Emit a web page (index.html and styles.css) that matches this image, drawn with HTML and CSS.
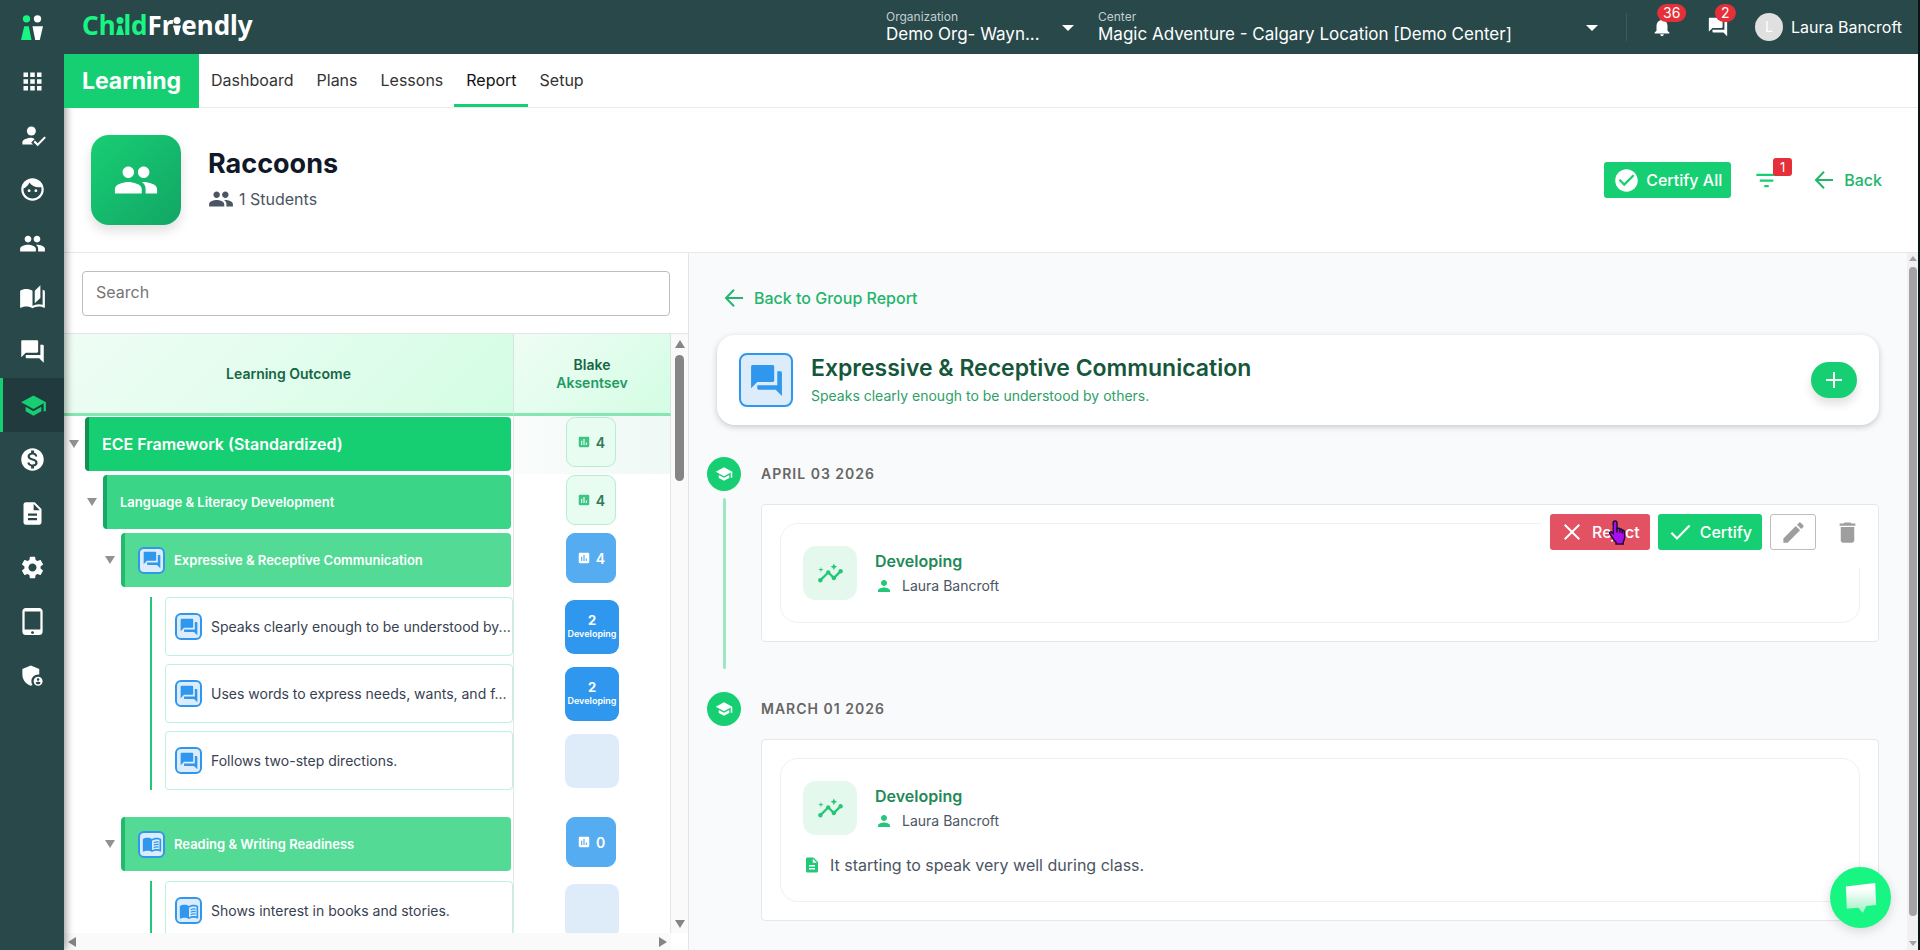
FILE: index.html
```
<!DOCTYPE html>
<html lang="en">

<head>
    <meta charset="UTF-8">
    <meta name="viewport" content="width=device-width, initial-scale=1.0">
    <title>ChildFriendly - Learning Report</title>
    <link rel="stylesheet" href="styles.css">
</head>

<body>
    <!-- icon set -->
    <svg class="defs" viewBox="0 0 24 24">
        <symbol id="apps" viewBox="0 0 24 24"><path d="M4 8h4V4H4v4zm6 12h4v-4h-4v4zm-6 0h4v-4H4v4zm0-6h4v-4H4v4zm6 0h4v-4h-4v4zm6-10v4h4V4h-4zm-6 4h4V4h-4v4zm6 6h4v-4h-4v4zm0 6h4v-4h-4v4z"/></symbol>
        <symbol id="attend" viewBox="0 0 24 24"><circle cx="11" cy="8" r="4"/><path d="M11 14c-3 0-8 1.300-8 4.200V20h9.500l-1.700-1.700 3-3 .4.300c-1-.9-2-1.600-3.200-1.600z"/><path d="M22.600 12.800l-6 6.100-2.400-2.400-1.300 1.400 3.700 3.700 7.300-7.500z"/></symbol>
        <symbol id="face" viewBox="0 0 24 24"><path d="M9 11.750c-.69 0-1.250.56-1.250 1.250s.56 1.250 1.250 1.250 1.250-.56 1.250-1.250-.56-1.250-1.250-1.250zm6 0c-.69 0-1.250.56-1.250 1.250s.56 1.250 1.250 1.250 1.250-.56 1.250-1.250-.56-1.250-1.250-1.250zM12 2C6.480 2 2 6.480 2 12s4.480 10 10 10 10-4.480 10-10S17.520 2 12 2zm0 18c-4.410 0-8-3.590-8-8 0-.29.020-.58.050-.86 2.360-1.050 4.230-2.980 5.210-5.370C11.070 8.330 14.050 10 17.420 10c.78 0 1.530-.09 2.250-.26.210.71.330 1.470.330 2.260 0 4.410-3.590 8-8 8z"/></symbol>
        <symbol id="group" viewBox="0 0 24 24"><path d="M16 11c1.660 0 2.990-1.340 2.990-3S17.660 5 16 5c-1.660 0-3 1.340-3 3s1.340 3 3 3zm-8 0c1.660 0 2.990-1.340 2.990-3S9.660 5 8 5C6.340 5 5 6.340 5 8s1.340 3 3 3zm0 2c-2.330 0-7 1.170-7 3.500V19h14v-2.500c0-2.330-4.670-3.500-7-3.500zm8 0c-.29 0-.62.020-.97.050 1.160.84 1.970 1.970 1.970 3.450V19h6v-2.500c0-2.330-4.670-3.500-7-3.500z"/></symbol>
        <symbol id="stories" viewBox="0 0 24 24"><path d="M19 1l-5 5v11l5-4.500V1zM1 6v14.650c0 .25.250.5.500.5.100 0 .150-.050.250-.050C3.100 20.450 5.050 20 6.500 20c1.950 0 4.050.4 5.500 1.500V6c-1.450-1.100-3.550-1.500-5.500-1.500S2.450 4.900 1 6zm22 13.500V6c-.6-.45-1.250-.75-2-1v13.500c-1.100-.35-2.300-.5-3.500-.5-1.700 0-4.150.65-5.500 1.500v2c1.350-.85 3.800-1.500 5.500-1.500 1.650 0 3.350.3 4.750 1.050.1.050.150.050.250.050.25 0 .5-.25.5-.5v-1.100z"/></symbol>
        <symbol id="forum" viewBox="0 0 24 24"><path d="M21 6h-2v9H6v2c0 .55.450 1 1 1h11l4 4V7c0-.55-.45-1-1-1zm-4 6V3c0-.55-.45-1-1-1H3c-.55 0-1 .45-1 1v14l4-4h10c.55 0 1-.45 1-1z"/></symbol>
        <symbol id="school" viewBox="0 0 24 24"><path d="M5 13.180v4L12 21l7-3.820v-4L12 17l-7-3.820zM12 3L1 9l11 6 9-4.910V17h2V9L12 3z"/></symbol>
        <symbol id="money" viewBox="0 0 24 24"><path d="M12 2C6.480 2 2 6.480 2 12s4.480 10 10 10 10-4.480 10-10S17.520 2 12 2zm1.410 16.090V20h-2.670v-1.930c-1.710-.36-3.160-1.460-3.270-3.400h1.960c.1 1.050.82 1.870 2.650 1.870 1.960 0 2.400-.98 2.400-1.590 0-.83-.44-1.610-2.670-2.140-2.480-.6-4.180-1.620-4.180-3.670 0-1.720 1.390-2.840 3.110-3.210V4h2.670v1.950c1.860.45 2.790 1.860 2.850 3.390H14.300c-.05-1.110-.64-1.870-2.220-1.870-1.500 0-2.400.68-2.400 1.640 0 .84.650 1.390 2.670 1.910s4.180 1.390 4.180 3.910c-.01 1.830-1.380 2.830-3.120 3.160z"/></symbol>
        <symbol id="doc" viewBox="0 0 24 24"><path d="M14 2H6c-1.100 0-2 .9-2 2v16c0 1.100.9 2 2 2h12c1.100 0 2-.9 2-2V8l-6-6zm2 16H8v-2h8v2zm0-4H8v-2h8v2zm-3-5V3.500L18.500 9H13z"/></symbol>
        <symbol id="gear" viewBox="0 0 24 24"><path d="M19.140 12.940c.04-.3.060-.61.060-.94 0-.32-.02-.64-.07-.94l2.030-1.580c.18-.14.230-.41.120-.61l-1.920-3.320c-.12-.22-.37-.29-.59-.22l-2.390.96c-.5-.38-1.030-.7-1.620-.94l-.36-2.540c-.04-.24-.24-.41-.48-.41h-3.840c-.24 0-.43.170-.47.410l-.36 2.540c-.59.240-1.130.57-1.620.94l-2.390-.96c-.22-.08-.47 0-.59.220L2.740 8.870c-.12.210-.08.470.12.610l2.030 1.580c-.05.3-.09.630-.09.940s.02.640.07.940l-2.030 1.580c-.18.140-.23.410-.12.610l1.920 3.320c.12.220.37.290.59.220l2.390-.96c.5.380 1.030.7 1.620.94l.36 2.540c.05.240.24.410.48.410h3.840c.24 0 .44-.17.470-.41l.36-2.540c.59-.24 1.130-.56 1.620-.94l2.390.96c.22.080.47 0 .59-.22l1.920-3.320c.12-.22.070-.47-.12-.61l-2.010-1.580zM12 15.600c-1.980 0-3.600-1.620-3.600-3.600s1.620-3.600 3.600-3.600 3.600 1.620 3.600 3.600-1.620 3.600-3.600 3.600z"/></symbol>
        <symbol id="tablet" viewBox="0 0 24 24"><path d="M18 0H6C4.340 0 3 1.340 3 3v18c0 1.660 1.340 3 3 3h12c1.660 0 3-1.340 3-3V3c0-1.660-1.340-3-3-3zm-6 23c-.8 0-1.300-.5-1.300-1.200s.5-1.200 1.300-1.200 1.300.5 1.300 1.200S12.800 23 12 23zm7-4H5V3h14v16z"/></symbol>
        <symbol id="shield" viewBox="0 0 24 24"><path d="M17 11c.34 0 .67.040 1 .09V6.270L10.500 3 3 6.270v4.910c0 4.540 3.200 8.790 7.500 9.820.55-.13 1.080-.32 1.600-.55-.69-.98-1.100-2.170-1.100-3.450 0-3.310 2.690-6 6-6z"/><path d="M17 13c-2.210 0-4 1.790-4 4s1.790 4 4 4 4-1.790 4-4-1.790-4-4-4zm0 1.380c.62 0 1.120.51 1.120 1.120s-.51 1.120-1.120 1.120-1.120-.51-1.120-1.120.5-1.120 1.120-1.120zm0 5.370c-.93 0-1.740-.46-2.240-1.170.05-.72 1.510-1.080 2.240-1.080s2.190.36 2.240 1.080c-.5.710-1.310 1.170-2.240 1.170z"/></symbol>
        <symbol id="bell" viewBox="0 0 24 24"><path d="M12 22c1.100 0 2-.9 2-2h-4c0 1.100.89 2 2 2zm6-6v-5c0-3.070-1.640-5.640-4.500-6.320V4c0-.83-.67-1.500-1.500-1.500s-1.500.67-1.500 1.500v.68C7.630 5.360 6 7.920 6 11v5l-2 2v1h16v-1l-2-2z"/></symbol>
        <symbol id="check-circle" viewBox="0 0 24 24"><path d="M12 2C6.480 2 2 6.480 2 12s4.480 10 10 10 10-4.480 10-10S17.520 2 12 2zm-2 15l-5-5 1.410-1.410L10 14.170l7.590-7.590L19 8l-9 9z"/></symbol>
        <symbol id="filter" viewBox="0 0 24 24"><path d="M10 18h4v-2h-4v2zM3 6v2h18V6H3zm3 7h12v-2H6v2z"/></symbol>
        <symbol id="arrow" viewBox="0 0 24 24"><path d="M21 11H6.400l6.300-6.600L11.300 3 2.600 12l8.700 9 1.400-1.400L6.400 13H21z"/></symbol>
        <symbol id="chart" viewBox="0 0 24 24"><path d="M19 3H5c-1.100 0-2 .9-2 2v14c0 1.100.9 2 2 2h14c1.100 0 2-.9 2-2V5c0-1.100-.9-2-2-2zM9 17H7v-7h2v7zm4 0h-2V7h2v10zm4 0h-2v-4h2v4z"/></symbol>
        <symbol id="book" viewBox="0 0 24 24"><path d="M21 5c-1.110-.35-2.330-.5-3.500-.5-1.950 0-4.050.4-5.500 1.500-1.450-1.100-3.550-1.500-5.500-1.500S2.450 4.900 1 6v14.650c0 .25.250.5.500.5.100 0 .150-.050.250-.050C3.100 20.450 5.050 20 6.500 20c1.950 0 4.050.4 5.500 1.500 1.350-.85 3.800-1.500 5.500-1.500 1.650 0 3.350.3 4.750 1.050.1.050.150.050.250.050.25 0 .5-.25.5-.5V6c-.6-.45-1.250-.75-2-1zm0 13.500c-1.100-.35-2.300-.5-3.500-.5-1.700 0-4.150.65-5.500 1.500V8c1.350-.85 3.800-1.500 5.500-1.500 1.200 0 2.400.15 3.500.5v11.500z"/><path d="M14 9.500c2-.9 3.800-1 6-.6v1.500c-2.200-.4-4-.3-6 .6zm0 3c2-.9 3.800-1 6-.6v1.500c-2.200-.4-4-.3-6 .6zm0 3c2-.9 3.800-1 6-.6v1.500c-2.200-.4-4-.3-6 .6z"/></symbol>
        <symbol id="insights" viewBox="0 0 24 24"><path d="M21 8c-1.450 0-2.260 1.440-1.930 2.510l-3.550 3.560c-.3-.09-.74-.09-1.040 0l-2.550-2.550C12.270 10.450 11.460 9 10 9c-1.450 0-2.270 1.440-1.930 2.520l-4.560 4.550C2.440 15.740 1 16.550 1 18c0 1.100.9 2 2 2 1.450 0 2.260-1.440 1.930-2.510l4.550-4.560c.3.090.74.090 1.040 0l2.550 2.550C12.730 16.550 13.540 18 15 18c1.450 0 2.270-1.440 1.930-2.520l3.560-3.550C21.560 12.260 23 11.450 23 10c0-1.100-.9-2-2-2z"/><path d="M15 9l.94-2.070L18 6l-2.060-.93L15 3l-.92 2.070L12 6l2.080.93zM3.500 11L4 9l2-.5L4 8l-.5-2L3 8l-2 .5L3 9z"/></symbol>
        <symbol id="person" viewBox="0 0 24 24"><path d="M12 12c2.210 0 4-1.790 4-4s-1.790-4-4-4-4 1.790-4 4 1.790 4 4 4zm0 2c-2.670 0-8 1.340-8 4v2h16v-2c0-2.660-5.330-4-8-4z"/></symbol>
        <symbol id="close" viewBox="0 0 24 24"><path d="M20 5.400L18.600 4 12 10.600 5.400 4 4 5.400l6.600 6.600L4 18.600 5.400 20l6.600-6.600 6.600 6.600 1.400-1.400-6.600-6.600z"/></symbol>
        <symbol id="check" viewBox="0 0 24 24"><path d="M9 16.900L4.200 12 2.600 13.600 9 20 22.400 6.300 20.800 4.700z"/></symbol>
        <symbol id="edit" viewBox="0 0 24 24"><path d="M3 17.250V21h3.750L17.810 9.940l-3.750-3.750L3 17.250zM20.710 7.040c.39-.39.390-1.020 0-1.410l-2.340-2.340c-.39-.39-1.020-.39-1.410 0l-1.830 1.830 3.750 3.750 1.830-1.830z"/></symbol>
        <symbol id="trash" viewBox="0 0 24 24"><path d="M6 19c0 1.100.9 2 2 2h8c1.100 0 2-.9 2-2V7H6v12zM19 4h-3.500l-1-1h-5l-1 1H5v2h14V4z"/></symbol>
        <symbol id="plus" viewBox="0 0 24 24"><path d="M20 11h-7V4h-2v7H4v2h7v7h2v-7h7z"/></symbol>
    </svg>

    <div class="app">
        <nav class="sidebar" aria-label="Main">
            <a class="side-logo" href="#" aria-label="Home">
                <svg viewBox="0 0 24 27"><g fill="#17f583"><circle cx="6" cy="4" r="4"/><path d="M3.500 12h5L11.500 27H0z"/></g><g fill="#fff"><circle cx="18" cy="4" r="4"/><path d="M12.500 12H24l-3.500 15h-5z"/></g></svg>
            </a>
            <a href="#" aria-label="Apps"><svg><use href="#apps"/></svg></a>
            <a href="#" aria-label="Attendance"><svg><use href="#attend"/></svg></a>
            <a href="#" aria-label="Children"><svg><use href="#face"/></svg></a>
            <a href="#" aria-label="Groups"><svg><use href="#group"/></svg></a>
            <a href="#" aria-label="Stories"><svg><use href="#stories"/></svg></a>
            <a href="#" aria-label="Messages"><svg><use href="#forum"/></svg></a>
            <a class="active" href="#" aria-label="Learning"><svg><use href="#school"/></svg></a>
            <a href="#" aria-label="Billing"><svg><use href="#money"/></svg></a>
            <a href="#" aria-label="Documents"><svg><use href="#doc"/></svg></a>
            <a href="#" aria-label="Settings"><svg><use href="#gear"/></svg></a>
            <a href="#" aria-label="Devices"><svg><use href="#tablet"/></svg></a>
            <a href="#" aria-label="Admin"><svg><use href="#shield"/></svg></a>
        </nav>

        <div class="page">
            <header class="topbar">
                <div class="brand"><span class="brand-green">Ch<span class="fig">i<svg viewBox="0 0 8 18"><circle cx="4" cy="3.500" r="3.500"/><path d="M2.500 8.500h3L8 18H0z"/></svg></span>ld</span>Fr<span class="fig">i<svg viewBox="0 0 8 18"><circle cx="4" cy="3.500" r="3.500"/><path d="M0 8.500h8L5.500 18h-3z"/></svg></span>endly</div>
                <div class="picker picker-org">
                    <label for="org">Organization</label>
                    <select id="org"><option>Demo Org- Wayn...</option></select>
                </div>
                <div class="picker picker-center">
                    <label for="center">Center</label>
                    <select id="center"><option>Magic Adventure - Calgary Location [Demo Center]</option></select>
                </div>
                <div class="user-area">
                    <button class="top-btn" aria-label="Notifications"><svg><use href="#bell"/></svg><span class="count">36</span></button>
                    <button class="top-btn" aria-label="Messages"><svg><use href="#forum"/></svg><span class="count">2</span></button>
                    <button class="user"><span class="avatar">L</span>Laura Bancroft</button>
                </div>
            </header>

            <nav class="tabs" aria-label="Learning">
                <span class="module">Learning</span>
                <a href="#">Dashboard</a>
                <a href="#">Plans</a>
                <a href="#">Lessons</a>
                <a class="current" href="#">Report</a>
                <a href="#">Setup</a>
            </nav>

            <section class="group-head">
                <div class="group-tile"><svg><use href="#group"/></svg></div>
                <div class="group-info">
                    <h1>Raccoons</h1>
                    <p><svg><use href="#group"/></svg>1 Students</p>
                </div>
                <div class="group-actions">
                    <button class="btn btn-green certify-all"><svg><use href="#check-circle"/></svg>Certify All</button>
                    <button class="filter" aria-label="Filter"><svg><use href="#filter"/></svg><span class="filter-count">1</span></button>
                    <a class="link" href="#"><svg><use href="#arrow"/></svg>Back</a>
                </div>
            </section>

            <main class="content">
                <section class="outcomes">
                    <div class="search"><input type="text" placeholder="Search" aria-label="Search"></div>
                    <div class="grid-area">
                        <div class="grid-view">
                            <table>
                                <thead>
                                    <tr><th class="col-outcome">Learning Outcome</th><th>Blake<span>Aksentsev</span></th></tr>
                                </thead>
                                <tbody>
                                    <tr class="row-bar level1">
                                        <td><div class="node"><button class="caret" aria-label="Collapse"></button><div class="bar">ECE Framework (Standardized)</div></div></td>
                                        <td><span class="score"><svg><use href="#chart"/></svg>4</span></td>
                                    </tr>
                                    <tr class="row-bar level2">
                                        <td><div class="node"><button class="caret" aria-label="Collapse"></button><div class="bar">Language &amp; Literacy Development</div></div></td>
                                        <td><span class="score"><svg><use href="#chart"/></svg>4</span></td>
                                    </tr>
                                    <tr class="row-bar level3">
                                        <td><div class="node"><button class="caret" aria-label="Collapse"></button><div class="bar"><span class="chip"><svg><use href="#forum"/></svg></span>Expressive &amp; Receptive Communication</div></div></td>
                                        <td><span class="score score-blue"><svg><use href="#chart"/></svg>4</span></td>
                                    </tr>
                                    <tr class="row-item first">
                                        <td><div class="branch"><div class="item"><span class="chip"><svg><use href="#forum"/></svg></span><span class="item-text">Speaks clearly enough to be understood by...</span></div></div></td>
                                        <td><button class="level">2<small>Developing</small></button></td>
                                    </tr>
                                    <tr class="row-item">
                                        <td><div class="branch"><div class="item"><span class="chip"><svg><use href="#forum"/></svg></span><span class="item-text">Uses words to express needs, wants, and f...</span></div></div></td>
                                        <td><button class="level">2<small>Developing</small></button></td>
                                    </tr>
                                    <tr class="row-item last">
                                        <td><div class="branch"><div class="item"><span class="chip"><svg><use href="#forum"/></svg></span><span class="item-text">Follows two-step directions.</span></div></div></td>
                                        <td><button class="level empty" aria-label="Not rated"></button></td>
                                    </tr>
                                    <tr class="row-bar level3">
                                        <td><div class="node"><button class="caret" aria-label="Collapse"></button><div class="bar"><span class="chip"><svg><use href="#book"/></svg></span>Reading &amp; Writing Readiness</div></div></td>
                                        <td><span class="score score-blue"><svg><use href="#chart"/></svg>0</span></td>
                                    </tr>
                                    <tr class="row-item first">
                                        <td><div class="branch"><div class="item"><span class="chip"><svg><use href="#book"/></svg></span><span class="item-text">Shows interest in books and stories.</span></div></div></td>
                                        <td><button class="level empty" aria-label="Not rated"></button></td>
                                    </tr>
                                </tbody>
                            </table>
                        </div>
                        <div class="vbar"><i class="up"></i><i class="thumb"></i><i class="down"></i></div>
                        <div class="hbar"><i class="prev"></i><i class="next"></i></div>
                    </div>
                </section>

                <section class="detail">
                    <a class="link back-link" href="#"><svg><use href="#arrow"/></svg>Back to Group Report</a>

                    <div class="topic">
                        <span class="topic-icon"><svg><use href="#forum"/></svg></span>
                        <div class="topic-text">
                            <h2>Expressive &amp; Receptive Communication</h2>
                            <p>Speaks clearly enough to be understood by others.</p>
                        </div>
                        <button class="add" aria-label="Add"><svg><use href="#plus"/></svg></button>
                    </div>

                    <article class="entry">
                        <div class="rail"><span class="dot"><svg><use href="#school"/></svg></span><span class="rail-line"></span></div>
                        <div class="entry-body">
                            <h3>APRIL 03 2026</h3>
                            <div class="entry-box">
                                <div class="note">
                                    <div class="note-head">
                                        <span class="note-icon"><svg><use href="#insights"/></svg></span>
                                        <div>
                                            <h4>Developing</h4>
                                            <p class="author"><svg><use href="#person"/></svg>Laura Bancroft</p>
                                        </div>
                                    </div>
                                </div>
                                <div class="entry-actions">
                                    <button class="btn btn-red"><svg><use href="#close"/></svg>Reject</button>
                                    <button class="btn btn-green"><svg><use href="#check"/></svg>Certify</button>
                                    <button class="btn btn-edit" aria-label="Edit"><svg><use href="#edit"/></svg></button>
                                    <button class="btn btn-trash" aria-label="Delete"><svg><use href="#trash"/></svg></button>
                                    <svg class="pointer" viewBox="0 0 18 26"><path d="M7 1c1.200 0 2 .8 2 2v6l1-.3c1-.2 1.700.2 2 .9 1-.3 1.900.1 2.200.9 1.200-.2 2.300.5 2.500 1.700l.3 5.300c0 2.500-.8 4-1.500 5v2.500H8V23c-1.500-1-3-3-4-5l-2.600-4c-.6-1.200.8-2.400 2.100-1.400L5 14V3c0-1.200.8-2 2-2z"/><path fill="none" d="M9 9v4m3-3v3m2.500-2v3"/></svg>
                                </div>
                            </div>
                        </div>
                    </article>

                    <article class="entry">
                        <div class="rail"><span class="dot"><svg><use href="#school"/></svg></span></div>
                        <div class="entry-body">
                            <h3>MARCH 01 2026</h3>
                            <div class="entry-box">
                                <div class="note">
                                    <div class="note-head">
                                        <span class="note-icon"><svg><use href="#insights"/></svg></span>
                                        <div>
                                            <h4>Developing</h4>
                                            <p class="author"><svg><use href="#person"/></svg>Laura Bancroft</p>
                                        </div>
                                    </div>
                                    <p class="comment"><svg><use href="#doc"/></svg>It starting to speak very well during class.</p>
                                </div>
                            </div>
                        </div>
                    </article>
                </section>
                <div class="vbar page-bar"><i class="up"></i><i class="thumb"></i><i class="down"></i></div>
            </main>
        </div>
    </div>

    <button class="chat" aria-label="Open chat">
        <svg viewBox="0 0 36 36"><defs><linearGradient id="bubble" x1="0" y1="0" x2="0" y2="1"><stop offset="0.200" stop-color="#fff"/><stop offset="1" stop-color="#9ff0c6"/></linearGradient></defs><path fill="url(#bubble)" d="M1 5L34 1l1 25-11 1-4 8-5-6-13 1z"/></svg>
    </button>
</body>

</html>
```
FILE: styles.css
```
* {
    margin: 0;
    padding: 0;
    box-sizing: border-box;
}

body {
    font-family: Inter, "Liberation Sans", sans-serif;
    font-size: 16px;
    color: #1f2937;
    background-color: #fff;
}

button,
input,
select {
    font: inherit;
    color: inherit;
    border: 0;
    background: none;
}

a {
    color: inherit;
    text-decoration: none;
}

svg {
    display: block;
    flex: none;
    width: 24px;
    height: 24px;
    fill: currentColor;
}

.defs {
    display: none;
}

.app {
    display: flex;
    height: 100vh;
    overflow: hidden;
    border-right: 2px solid #0c1415;
}

/* sidebar */
.sidebar {
    width: 64px;
    flex: none;
    background-color: #28484a;
    color: #fff;
    box-shadow: 2px 0 8px rgba(0, 0, 0, .4);
    z-index: 2;
}

.sidebar a {
    display: flex;
    align-items: center;
    justify-content: center;
    height: 54px;
}

.sidebar svg {
    width: 27px;
    height: 27px;
}

.sidebar .side-logo svg {
    width: 22px;
    height: 25px;
}

.sidebar .active {
    color: #17cf73;
    background-color: #203a3e;
    border-left: 3px solid #17cf73;
}

.page {
    flex: 1;
    min-width: 0;
    display: flex;
    flex-direction: column;
}

/* top bar */
.topbar {
    display: flex;
    align-items: center;
    flex: none;
    height: 54px;
    padding: 0 16px 0 18px;
    background-color: #28484a;
    color: #fff;
    position: relative;
    z-index: 3;
}

.brand {
    font-family: "Noto Sans", sans-serif;
    font-size: 26px;
    font-weight: 700;
    line-height: 32px;
    margin-right: auto;
    padding-bottom: 4px;
}

.brand-green {
    color: #17f583;
}

.fig {
    position: relative;
    -webkit-text-fill-color: transparent;
}

.fig svg {
    position: absolute;
    left: 0;
    bottom: 8px;
    width: 8px;
    height: 18px;
}

.picker {
    position: relative;
    display: flex;
    flex-direction: column;
}

.picker label {
    font-size: 12px;
    line-height: 14px;
    color: #c3cecf;
}

.picker select {
    appearance: none;
    font-size: 17px;
    line-height: 20px;
    width: 100%;
}

.picker::after {
    content: "";
    position: absolute;
    right: 8px;
    top: 15px;
    border: 6px solid transparent;
    border-top-color: #fff;
    border-bottom: 0;
}

.picker-org {
    width: 196px;
    margin-right: 16px;
}

.picker-center {
    width: 508px;
}

.user-area {
    display: flex;
    align-items: center;
    height: 28px;
    margin-left: 20px;
    padding-left: 24px;
    border-left: 1px solid #3d5a5c;
}

.top-btn {
    position: relative;
    width: 24px;
    margin-right: 32px;
}

.top-btn + .user {
    margin-left: -8px;
}

.top-btn svg {
    width: 22px;
    height: 22px;
}

.count {
    position: absolute;
    left: 12px;
    top: -12px;
    transform: translateX(-20%);
    min-width: 20px;
    padding: 0 6px;
    border-radius: 10px;
    background-color: #e5303a;
    font-size: 14px;
    line-height: 18px;
}

.user {
    display: flex;
    align-items: center;
    gap: 8px;
}

.avatar {
    width: 28px;
    height: 28px;
    border-radius: 50%;
    background-color: #e0e0e0;
    color: #fff;
    font-size: 14px;
    line-height: 28px;
}

/* module tabs */
.tabs {
    position: relative;
    z-index: 3;
    display: flex;
    flex: none;
    height: 54px;
    border-bottom: 1px solid #e9ebec;
    background-color: #fff;
    color: #333;
}

.module {
    width: 135px;
    height: 54px;
    background-color: #17cf73;
    color: #fff;
    font-size: 23px;
    font-weight: 700;
    line-height: 54px;
    text-align: center;
}

.tabs a {
    padding: 0 11px 0 12px;
    line-height: 53px;
}

.tabs .current {
    color: #111;
    border-bottom: 3px solid #17cf73;
}

/* group header */
.group-head {
    display: flex;
    align-items: center;
    flex: none;
    height: 145px;
    padding: 0 36px 0 27px;
    border-bottom: 1px solid #e6e8ea;
}

.group-tile {
    display: flex;
    align-items: center;
    justify-content: center;
    width: 90px;
    height: 90px;
    border-radius: 18px;
    background-image: linear-gradient(135deg, #17cf73, #12a566);
    box-shadow: 0 6px 12px rgba(0, 0, 0, .12);
    color: #fff;
}

.group-tile svg {
    width: 46px;
    height: 46px;
}

.group-info {
    margin-left: 27px;
    margin-right: auto;
}

.group-info h1 {
    font-size: 27px;
    font-weight: 700;
    line-height: 38px;
    color: #111827;
}

.group-info p {
    display: flex;
    align-items: center;
    gap: 5px;
    line-height: 32px;
    color: #4b5563;
}

.group-info svg {
    width: 26px;
    height: 26px;
}

.group-actions {
    display: flex;
    align-items: center;
    gap: 22px;
}

.btn {
    display: flex;
    align-items: center;
    justify-content: center;
    gap: 8px;
    height: 36px;
    padding: 0 10px;
    border-radius: 3px;
    font-weight: 500;
    color: #fff;
}

.btn-green {
    background-color: #17cf73;
}

.btn-red {
    background-color: #e35263;
}

.certify-all {
    padding: 0 9px;
    gap: 6px;
}

.certify-all svg {
    width: 27px;
    height: 27px;
}

.filter {
    position: relative;
    color: #17cf73;
}

.filter svg {
    width: 27px;
    height: 27px;
}

.filter-count {
    position: absolute;
    left: 20px;
    top: -9px;
    width: 19px;
    border-radius: 3px;
    background-color: #e5303a;
    color: #fff;
    font-size: 13px;
    line-height: 18px;
}

.link {
    display: flex;
    align-items: center;
    gap: 8px;
    font-weight: 500;
    color: #24b56c;
}

.group-actions .link {
    margin-left: 10px;
}

/* main area */
.content {
    flex: 1;
    min-height: 0;
    display: flex;
}

.outcomes {
    display: flex;
    flex-direction: column;
    width: 625px;
    flex: none;
    border-right: 1px solid #e3e5e7;
}

.search {
    flex: none;
    padding: 18px 18px 17px;
    border-bottom: 1px solid #e3e5e7;
}

.search input {
    width: 100%;
    height: 45px;
    padding: 0 13px 4px;
    border: 1px solid #bdbdbd;
    border-radius: 4px;
}

.search input::placeholder {
    color: #757575;
    opacity: 1;
}

.grid-area {
    flex: 1;
    min-height: 0;
    display: grid;
    grid-template-columns: 1fr 17px;
    grid-template-rows: 1fr 17px;
}

.grid-view {
    overflow: hidden;
}

table {
    width: 100%;
    border-collapse: separate;
    border-spacing: 0;
    table-layout: fixed;
}

th {
    height: 82px;
    border-right: 1px solid #d5e5dc;
    border-bottom: 3px solid #86e5b1;
    background-image: linear-gradient(135deg, #effdf5, #d4fde4);
    color: #166544;
    font-size: 14px;
    font-weight: 600;
    line-height: 18px;
}

th span {
    display: block;
    color: #219a62;
}

.col-outcome {
    width: 450px;
}

td {
    vertical-align: top;
    border-right: 1px solid #e3e5e7;
}

td:last-child {
    text-align: center;
}

.row-bar td {
    padding: 1px 2px 3px 0;
}

.level1 td:last-child {
    background-image: linear-gradient(90deg, #f9fcfb, #eff9f5);
}

.node {
    display: flex;
    align-items: center;
}

.caret {
    flex: none;
    margin: 0 6px 0 5px;
    border: 5px solid transparent;
    border-top: 8px solid #8f9391;
    border-bottom: 0;
}

.bar {
    display: flex;
    align-items: center;
    flex: 1;
    height: 54px;
    padding-left: 13px;
    border-left: 4px solid #22ba6c;
    border-radius: 4px;
    background-color: #53da95;
    color: #fff;
    font-size: 13px;
    font-weight: 600;
}

.level1 .bar {
    font-size: 16px;
    background-color: #17cf73;
    border-color: #129052;
}

.level2 .node {
    padding-left: 18px;
}

.level2 .bar {
    background-color: #3bd588;
    border-color: #18a863;
}

.level3 .node {
    padding-left: 36px;
}

.chip {
    display: flex;
    align-items: center;
    justify-content: center;
    flex: none;
    width: 27px;
    height: 27px;
    margin-right: 9px;
    border: 2px solid #2f97ed;
    border-radius: 6px;
    background-color: #dcecfb;
    color: #2f97ed;
}

.chip svg {
    width: 20px;
    height: 20px;
}

.score {
    display: inline-flex;
    align-items: center;
    justify-content: center;
    gap: 5px;
    width: 50px;
    height: 50px;
    border: 1px solid #b5eed0;
    border-radius: 9px;
    background-color: #e9fcf1;
    color: #2d7a56;
    font-size: 14px;
    font-weight: 600;
    vertical-align: top;
}

.score svg {
    width: 14px;
    height: 14px;
    color: #3fc583;
}

.score-blue {
    border-color: #56acf0;
    background-color: #56acf0;
    color: #fff;
}

.score-blue svg {
    color: #fff;
}

.first td {
    padding-top: 7px;
}

.branch {
    margin-left: 86px;
    padding: 0 0 8px 13px;
    border-left: 2px solid #22c877;
}

.last .branch {
    padding-bottom: 0;
}

.last td {
    padding-bottom: 26px;
}

.item {
    display: flex;
    align-items: center;
    height: 59px;
    padding: 0 9px;
    border: 1px solid #bdf2dc;
    border-radius: 4px;
}

.item-text {
    font-size: 14px;
    color: #374151;
    white-space: nowrap;
}

.level {
    display: inline-block;
    width: 54px;
    height: 54px;
    margin-top: 3px;
    border-radius: 9px;
    background-color: #2f97ed;
    color: #fff;
    font-size: 13px;
    font-weight: 700;
    line-height: 14px;
    vertical-align: top;
}

.level small {
    display: block;
    font-size: 9px;
    font-weight: 600;
}

.level.empty {
    background-color: #deecf9;
}

/* drawn scrollbars */
.vbar,
.hbar {
    display: flex;
    align-items: center;
    background-color: #fafafa;
}

.vbar {
    flex-direction: column;
    padding: 6px 0 5px;
}

.hbar {
    justify-content: space-between;
    padding: 0 4px;
}

.up,
.down,
.prev,
.next {
    border: 5px solid transparent;
}

.up {
    border-top: 0;
    border-bottom: 8px solid #858585;
}

.down {
    margin-top: auto;
    border-bottom: 0;
    border-top: 8px solid #858585;
}

.prev {
    border-left: 0;
    border-right: 8px solid #858585;
}

.next {
    border-right: 0;
    border-left: 8px solid #858585;
}

.thumb {
    width: 9px;
    height: 126px;
    margin-top: 7px;
    border-radius: 5px;
    background-color: #858585;
}

.page-bar {
    width: 11px;
    flex: none;
    padding: 3px 0 4px;
    background-color: #f1f1f1;
}

.page-bar .up,
.page-bar .down {
    border-width: 4px;
    border-top-width: 0;
    border-bottom: 5px solid #a3a3a3;
}

.page-bar .down {
    border-color: transparent;
    border-bottom-width: 0;
    border-top: 5px solid #a3a3a3;
}

.page-bar .thumb {
    flex: 1;
    width: 8px;
    margin: 6px 0 25px;
    background-color: #a3a3a3;
}

/* detail */
.detail {
    flex: 1;
    min-width: 0;
    overflow: hidden;
    padding: 33px 28px 0 18px;
    background-color: #f9fafb;
}

.back-link {
    margin: 0 0 25px 15px;
}

.topic {
    display: flex;
    align-items: center;
    height: 90px;
    margin-left: 10px;
    padding: 0 22px;
    border-radius: 18px;
    background-color: #fff;
    box-shadow: 0 2px 6px rgba(0, 0, 0, .2);
}

.topic-icon {
    display: flex;
    align-items: center;
    justify-content: center;
    width: 54px;
    height: 54px;
    border: 2px solid #2f97ed;
    border-radius: 8px;
    background-color: #dcecfb;
    color: #2f97ed;
}

.topic-icon svg {
    width: 37px;
    height: 37px;
}

.topic-text {
    margin: 0 auto 0 18px;
}

.topic-text h2 {
    font-size: 23px;
    font-weight: 600;
    line-height: 32px;
    color: #15573b;
}

.topic-text p {
    font-size: 14px;
    line-height: 24px;
    color: #2f9e68;
}

.add {
    display: flex;
    align-items: center;
    justify-content: center;
    width: 46px;
    height: 36px;
    border-radius: 18px;
    background-color: #17cf73;
    color: #fff;
    box-shadow: 0 6px 10px rgba(0, 0, 0, .12);
}

.entry {
    display: flex;
    gap: 20px;
    margin-bottom: 50px;
}

.topic + .entry {
    margin-top: 32px;
}

.rail {
    display: flex;
    flex-direction: column;
    align-items: center;
    gap: 7px;
    width: 34px;
    margin-bottom: -27px;
}

.dot {
    display: flex;
    align-items: center;
    justify-content: center;
    width: 34px;
    height: 34px;
    border-radius: 50%;
    background-color: #17cf73;
    color: #fff;
}

.dot svg {
    width: 18px;
    height: 18px;
}

.rail-line {
    flex: 1;
    width: 3px;
    border-radius: 2px;
    background-color: #9fe7c1;
}

.entry-body {
    flex: 1;
}

.entry-body h3 {
    margin-bottom: 13px;
    font-size: 14px;
    font-weight: 600;
    line-height: 34px;
    letter-spacing: 1px;
    color: #666;
}

.entry-box {
    position: relative;
    padding: 18px;
    border: 1px solid #e5e7eb;
    border-radius: 4px;
    background-color: #fff;
}

.note {
    padding: 22px;
    border: 1px solid #eef0f4;
    border-radius: 18px;
}

.note-head {
    display: flex;
    align-items: center;
    gap: 18px;
}

.note-icon {
    display: flex;
    align-items: center;
    justify-content: center;
    width: 54px;
    height: 54px;
    border-radius: 13px;
    background-color: #e5f8ed;
    color: #22c877;
}

.note-icon svg {
    width: 27px;
    height: 27px;
}

.note h4 {
    font-size: 16px;
    font-weight: 600;
    line-height: 26px;
    color: #1e8a57;
}

.author {
    display: flex;
    align-items: center;
    gap: 9px;
    font-size: 14px;
    line-height: 24px;
    color: #4b5563;
}

.author svg {
    width: 18px;
    height: 18px;
    color: #22c877;
}

.comment {
    display: flex;
    align-items: center;
    gap: 9px;
    margin-top: 16px;
    line-height: 28px;
    color: #4b5563;
}

.comment svg {
    width: 18px;
    height: 18px;
    color: #22c877;
}

.entry-actions {
    position: absolute;
    top: 0;
    right: 4px;
    display: flex;
    gap: 8px;
    padding: 9px 4px 18px 9px;
    background-color: #fff;
}

.entry-actions .btn-edit svg,
.entry-actions .btn-trash svg {
    width: 27px;
    height: 27px;
}

.btn-edit {
    width: 46px;
    border: 1px solid #bdbdbd;
    color: #9e9e9e;
}

.btn-trash {
    width: 46px;
    color: #9e9e9e;
}

.pointer {
    position: absolute;
    left: 67px;
    top: 15px;
    width: 18px;
    height: 25px;
    fill: #a90fee;
    stroke: #1d0a2b;
    stroke-width: 1.500;
}

.chat {
    position: fixed;
    right: 29px;
    bottom: 22px;
    display: flex;
    align-items: center;
    justify-content: center;
    width: 61px;
    height: 61px;
    border-radius: 50%;
    background-color: #17f583;
    box-shadow: 0 3px 12px rgba(0, 0, 0, .15);
}

.chat svg {
    width: 36px;
    height: 32px;
}
```
